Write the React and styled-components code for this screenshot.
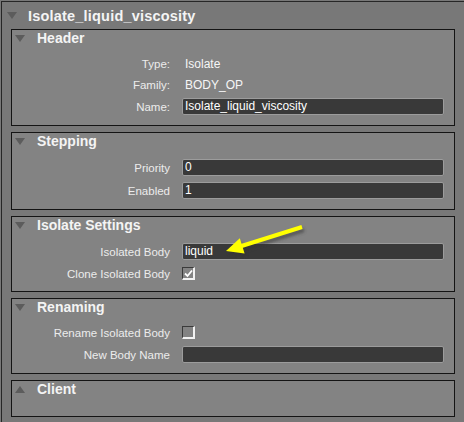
import React from 'react';
import styled, { createGlobalStyle } from 'styled-components';

const GlobalStyle = createGlobalStyle`
  html, body {
    margin: 0;
    padding: 0;
    background: #787878;
  }
  body {
    font-family: "Liberation Sans", Arial, sans-serif;
  }
`;

const Screen = styled.div`
  position: relative;
  width: 464px;
  height: 422px;
  overflow: hidden;
  background: #787878;
  padding: 1px 0 0 1px;
  box-sizing: border-box;
`;

const Frame = styled.div`
  height: 100%;
  border-top: 1px solid #262626;
  border-left: 1px solid #262626;
  box-sizing: border-box;
`;

const FrameTitle = styled.div`
  display: flex;
  align-items: center;
  height: 27px;
  padding-left: 5px;
  gap: 11px;
  color: #f4f4f4;
  font-size: 14.5px;
  font-weight: bold;
  letter-spacing: 0.2px;
`;

const Triangle = styled.span`
  width: 0;
  height: 0;
  border-left: 5px solid transparent;
  border-right: 5px solid transparent;
  ${p => (p.$up
    ? 'border-bottom: 7px solid #5c5c5c;'
    : 'border-top: 7px solid #5c5c5c;')}
  flex: none;
`;

const Panels = styled.div`
  display: flex;
  flex-direction: column;
  gap: 6px;
  padding-left: 9px;
`;

const Panel = styled.section`
  width: 444px;
  box-sizing: border-box;
  border: 1px solid #141414;
  background: #838383;
  padding-bottom: ${p => p.$pad ?? 10}px;
`;

const PanelTitle = styled.div`
  display: flex;
  align-items: center;
  gap: 12px;
  height: 16px;
  padding-left: 3px;
  color: #f4f4f4;
  font-size: 14px;
  font-weight: bold;
`;

const Rows = styled.div`
  display: flex;
  flex-direction: column;
  gap: 6px;
  margin-top: 10px;
`;

const Row = styled.div`
  display: grid;
  grid-template-columns: 158px 262px;
  column-gap: 12px;
  align-items: center;
  min-height: 15px;
`;

const Label = styled.span`
  text-align: right;
  color: #ececec;
  font-size: 11.5px;
`;

const Value = styled.span`
  padding-left: 3px;
  color: #f6f6f6;
  font-size: 12px;
`;

const Field = styled.div`
  height: 17px;
  box-sizing: border-box;
  background: #393939;
  border: 1px solid #9c9c9c;
  border-radius: 2px;
  color: #ffffff;
  font-size: 12px;
  line-height: 15px;
  padding-left: 2px;
`;

const Check = styled.div`
  width: 13px;
  height: 13px;
  box-sizing: border-box;
  border-top: 1px solid #3a3a3a;
  border-left: 1px solid #3a3a3a;
  border-right: 2px solid #f2f2f2;
  border-bottom: 2px solid #f2f2f2;
  display: flex;
  align-items: center;
  justify-content: center;
`;

const Arrow = styled.svg`
  position: absolute;
  left: 0;
  top: 0;
  pointer-events: none;
`;

function CheckBox({ checked }) {
  return (
    <Check>
      {checked && (
        <svg width="9" height="9" viewBox="0 0 9 9">
          <path d="M1 4.5 L3.5 7 L8 1.5" fill="none" stroke="#ffffff" strokeWidth="1.8" />
        </svg>
      )}
    </Check>
  );
}

function Section({ title, collapsed, pad, children }) {
  return (
    <Panel $pad={pad}>
      <PanelTitle>
        <Triangle $up={collapsed} />
        {title}
      </PanelTitle>
      {children && <Rows>{children}</Rows>}
    </Panel>
  );
}

export default function App() {
  return (
    <Screen>
      <GlobalStyle />
      <Frame>
        <FrameTitle>
          <Triangle />
          Isolate_liquid_viscosity
        </FrameTitle>
        <Panels>
          <Section title="Header">
            <Row><Label>Type:</Label><Value>Isolate</Value></Row>
            <Row><Label>Family:</Label><Value>BODY_OP</Value></Row>
            <Row><Label>Name:</Label><Field>Isolate_liquid_viscosity</Field></Row>
          </Section>
          <Section title="Stepping">
            <Row><Label>Priority</Label><Field>0</Field></Row>
            <Row><Label>Enabled</Label><Field>1</Field></Row>
          </Section>
          <Section title="Isolate Settings">
            <Row><Label>Isolated Body</Label><Field>liquid</Field></Row>
            <Row><Label>Clone Isolated Body</Label><CheckBox checked /></Row>
          </Section>
          <Section title="Renaming">
            <Row><Label>Rename Isolated Body</Label><CheckBox /></Row>
            <Row><Label>New Body Name</Label><Field /></Row>
          </Section>
          <Section title="Client" collapsed pad={19} />
        </Panels>
      </Frame>
      <Arrow width="464" height="422" viewBox="0 0 464 422">
        <defs>
          <filter id="arrowShadow" x="-20%" y="-50%" width="140%" height="200%">
            <feGaussianBlur stdDeviation="1.5" />
          </filter>
        </defs>
        <g transform="translate(2 3)" filter="url(#arrowShadow)" opacity="0.55">
          <line x1="302" y1="227" x2="240" y2="246.5" stroke="#333" strokeWidth="4" />
          <polygon points="226,251 244.6,253.5 239.8,238.3" fill="#333" />
        </g>
        <line x1="302" y1="227" x2="240" y2="246.5" stroke="#ffff00" strokeWidth="4" />
        <polygon points="226,251 244.6,253.5 239.8,238.3" fill="#ffff00" />
      </Arrow>
    </Screen>
  );
}
